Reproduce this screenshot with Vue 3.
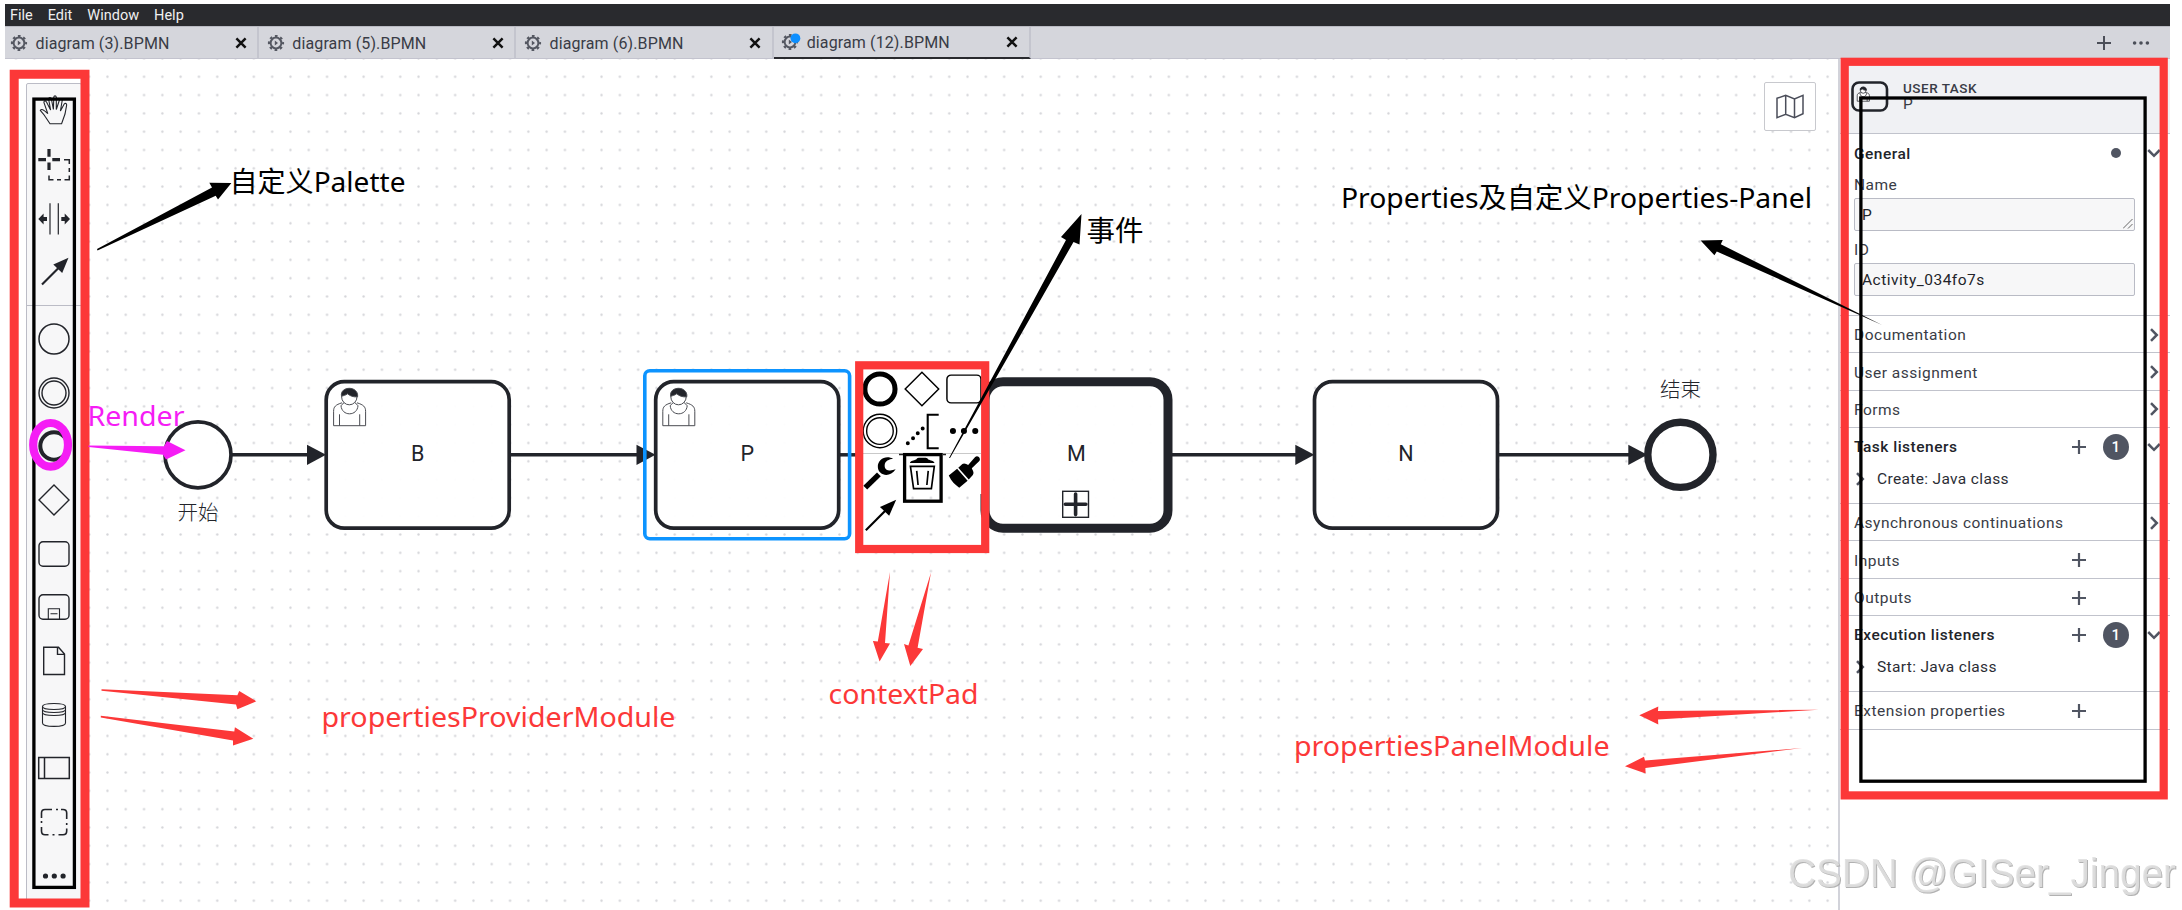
<template>
  <div class="app">
    <nav class="menu">
      <span v-for="item in menu" :key="item">{{ item }}</span>
    </nav>

    <div class="tabs">
      <div v-for="tab in tabs" :key="tab.name" class="tab" :class="{ active: tab.active }">
        <svg class="gear" viewBox="0 0 24 24">
          <circle cx="10" cy="12" r="5.4" class="gear-ring" />
          <circle cx="10" cy="12" r="7" class="gear-teeth" />
          <path d="M8.8 9.4v5.2l3.2-2.6z" class="gear-core" />
          <circle v-if="tab.active" cx="15.4" cy="8.3" r="4.9" class="gear-dirty" />
        </svg>
        <span class="tab-name">{{ tab.name }}</span>
        <svg class="close" viewBox="0 0 12 12"><path d="M1.4 1.4l9.2 9.2M10.6 1.4l-9.2 9.2" /></svg>
      </div>
      <div class="tab-actions">
        <svg class="add" viewBox="0 0 14 14"><path d="M7 0v14M0 7h14" /></svg>
        <svg class="more" viewBox="0 0 18 6">
          <circle cx="2.6" cy="3" r="1.8" /><circle cx="9" cy="3" r="1.8" /><circle cx="15.4" cy="3" r="1.8" />
        </svg>
      </div>
    </div>

    <main class="workspace">
      <section class="canvas">
        <svg class="diagram" viewBox="5 59 1833 851">
          <defs>
            <pattern id="grid" x="98.3" y="67.6" width="18.3" height="18.31" patternUnits="userSpaceOnUse">
              <circle cx="9.15" cy="9.15" r="1.15" fill="#d3d4d8" />
            </pattern>
            <g id="user">
              <path d="M9 14.5C2.500 16.500 .6 18.500 .6 23V37.400H32.600V23C32.600 18.500 30.500 16.500 24 14.500M6.500 26v11.400M26.700 26v11.400" />
              <path d="M11.800 13.500C10.600 15.500 9.500 15 8 17.500C8.500 22.500 12 25.500 16.500 25.500S24.500 22.500 25 17.500C23.500 15 22.300 15.500 21.200 13.500" />
              <ellipse cx="16.300" cy="8.500" rx="7.700" ry="8" />
              <path d="M8.500 8C7.500 2.500 12 0 16.400 0S25.300 3 24.600 8.500C20 9 17 7.500 14.500 5.500C12.500 7 10.500 7.300 8.500 8z" class="hair" />
            </g>
          </defs>
          <rect x="5" y="59" width="1833" height="851" fill="url(#grid)" />

          <g class="flow">
            <path v-for="f in flows" :key="f.from" :d="`M${f.from} 454.800H${f.to}`" />
            <path v-for="f in heads" :key="f" :d="`M${f} 444.700l19 10.100l-19 10.100z`" class="head" />
          </g>

          <circle cx="198" cy="454.800" r="33" class="shape" />
          <circle cx="1680.400" cy="454.800" r="32.600" class="shape end" />
          <rect
            v-for="t in tasks"
            :key="t.name"
            :x="t.x"
            y="381.700"
            width="183"
            height="146.500"
            rx="18"
            class="shape"
            :class="{ call: t.call }"
          />
          <use href="#user" x="333" y="388.300" class="user" />
          <use href="#user" x="662.200" y="388.300" class="user" />
          <g class="marker">
            <rect x="1062.700" y="491.300" width="25.800" height="26" />
            <path d="M1075.600 494v20.600M1065.300 504.300h20.600" />
          </g>
          <rect x="644.800" y="370.800" width="204.800" height="168" rx="5" class="selection" />
          <text v-for="t in tasks" :key="t.name" :x="t.x + 91.500" y="461.200" class="task-name">{{ t.name }}</text>
          <text x="198" y="519.500" class="event-name">开始</text>
          <text x="1680.400" y="396.500" class="event-name">结束</text>
        </svg>

        <div class="palette">
          <div v-for="entry in palette" :key="entry.name" class="entry" :class="{ last: entry.name === 'connect' }">
            <svg viewBox="0 0 40 40">
              <path
                v-for="(s, i) in entry.shapes"
                :key="i"
                :d="s.d"
                :fill="s.fill ? '#22242a' : 'none'"
                :stroke="s.fill ? 'none' : '#22242a'"
                :stroke-width="s.w || 1.4"
              />
            </svg>
          </div>
        </div>

        <div class="pad">
          <div v-for="entry in pad" :key="entry.name" class="pad-entry">
            <svg viewBox="0 0 40 40">
              <path
                v-for="(s, i) in entry.shapes"
                :key="i"
                :d="s.d"
                :fill="s.fill ? '#000' : 'none'"
                :stroke="s.fill ? 'none' : '#000'"
                :stroke-width="s.w || 1.4"
              />
            </svg>
          </div>
        </div>

        <button class="minimap">
          <svg viewBox="0 0 28 25">
            <path d="M1 4.300L9.700 1.300L18.500 5L27 1.300V19.700L18.500 23.700L9.700 20.300L1 23.700zM9.700 1.300v19M18.500 5v18.700" />
          </svg>
        </button>
      </section>

      <aside class="panel">
        <header class="panel-header">
          <svg class="panel-icon" viewBox="0 0 38 32">
            <rect x="1.500" y="1.500" width="34.500" height="28" rx="6.500" />
            <use href="#user" transform="translate(6 6) scale(.38)" />
          </svg>
          <div class="panel-title">
            <strong>USER TASK</strong>
            <span>P</span>
          </div>
        </header>

        <div class="group general">
          <div class="row bold">
            <span>General</span><i></i><i class="dot"></i>
            <svg class="chev" viewBox="0 0 14 14"><path d="M1.200 4l5.800 5.800l5.800-5.800" /></svg>
          </div>
          <label>Name</label>
          <div class="field">P
            <svg class="grip" viewBox="0 0 10 10"><path d="M0 9.500L9.500 0M5 9.500L9.500 5" /></svg>
          </div>
          <label class="id-label">ID</label>
          <div class="field">Activity_034fo7s</div>
        </div>

        <div v-for="g in groups" :key="g.name" class="group">
          <div class="row" :class="{ bold: g.count }">
            <span>{{ g.name }}</span>
            <svg v-if="g.add" class="plus" viewBox="0 0 14 14"><path d="M7 0v14M0 7h14" /></svg>
            <i v-else></i>
            <b v-if="g.count" class="badge">{{ g.count }}</b>
            <i v-else></i>
            <svg v-if="g.count" class="chev" viewBox="0 0 14 14"><path d="M1.200 4l5.800 5.800l5.800-5.800" /></svg>
            <svg v-else-if="!g.add" class="chev" viewBox="0 0 14 14"><path d="M4 1.200l5.800 5.800l-5.800 5.800" /></svg>
          </div>
          <div v-if="g.child" class="child">
            <svg class="chev" viewBox="0 0 14 14"><path d="M4 1.200l5.800 5.800l-5.800 5.800" /></svg>
            <span>{{ g.child }}</span>
          </div>
        </div>
      </aside>
    </main>

    <!-- notes drawn over the whole window -->
    <svg class="notes" viewBox="0 0 2182 910">
      <path d="M863 453.500H981" stroke="#c9c9c9" stroke-width="1.200" />
      <path d="M899 454.500h4M943 454.500h3" stroke="#222" stroke-width="1.500" />
      <g class="box black">
        <rect x="33.900" y="99.100" width="40.500" height="788.300" />
        <rect x="904.600" y="454.600" width="36.500" height="46.600" />
        <rect x="1860.900" y="98" width="284.200" height="683.200" />
      </g>
      <g class="box red">
        <path d="M14.200 74.200H85V902.900H14.200z" stroke-width="9" />
        <rect x="859.200" y="365.300" width="126" height="183.700" />
        <rect x="1844.700" y="61.800" width="319" height="733.600" />
      </g>
      <path v-for="a in blackArrows" :key="a" :d="a" />
      <path v-for="a in redArrows" :key="a" :d="a" class="red-fill" />
      <ellipse cx="50.600" cy="444.800" rx="17.400" ry="21.800" class="ring" />
      <path d="M88.500 445.500L164 446.300L167 441L185.500 450.300L166 459.500L163 454.700L88.500 447z" class="pink" />

      <text
        v-for="n in notes"
        :key="n.text"
        :x="n.x"
        :y="n.y"
        :textLength="n.w"
        lengthAdjust="spacingAndGlyphs"
        :class="n.tone"
      >{{ n.text }}</text>
      <text x="1788" y="886.500" textLength="388" lengthAdjust="spacingAndGlyphs" class="watermark">CSDN @GISer_Jinger</text>
    </svg>
  </div>
</template>

<script setup>
const menu = ['File', 'Edit', 'Window', 'Help']

const tabs = [
  { name: 'diagram (3).BPMN' },
  { name: 'diagram (5).BPMN' },
  { name: 'diagram (6).BPMN' },
  { name: 'diagram (12).BPMN', active: true }
]

const tasks = [
  { name: 'B', x: 326.2 },
  { name: 'P', x: 655.7 },
  { name: 'M', x: 985, call: true },
  { name: 'N', x: 1314.5 }
]

const flows = [
  { from: 231, to: 312 },
  { from: 510, to: 641 },
  { from: 840, to: 858 },
  { from: 1170, to: 1300 },
  { from: 1498, to: 1632 }
]
const heads = [307, 636.5, 1295.3, 1628.3]

const circle = (r, cx = 20, cy = 20) =>
  `M${cx - r} ${cy}a${r} ${r} 0 1 0 ${2 * r} 0a${r} ${r} 0 1 0 ${-2 * r} 0z`

const roundRect = (w, h, r) =>
  `M${20 - w / 2 + r} ${20 - h / 2}h${w - 2 * r}a${r} ${r} 0 0 1 ${r} ${r}v${h - 2 * r}a${r} ${r} 0 0 1 ${-r} ${r}` +
  `h${2 * r - w}a${r} ${r} 0 0 1 ${-r} ${-r}v${2 * r - h}a${r} ${r} 0 0 1 ${r} ${-r}z`

const palette = [
  {
    name: 'hand',
    shapes: [{
      w: 1.1,
      d: 'M16 32.700L11.500 26C9.500 22.500 7 20.500 6.300 19.400C7.300 17.500 9.500 18.500 13.800 22.600L9.900 11.500C9.800 9.500 11.800 9.300 12.500 11L16.600 19L14.600 8C14.800 6 17 6 17.400 8L19.400 18.500L19.800 6C20 4.500 22 4.500 22.300 6L22.300 18.500L25.600 8.500C26.500 7 28.400 7.600 28.200 9.500L26.400 20L30.200 13C31.300 11.800 33 12.600 32.600 14.400L31 23L27.600 32.700z'
    }]
  },
  {
    name: 'lasso',
    shapes: [
      { w: 3.2, d: 'M4.300 14.700H12M18.300 14.700H26M15 4V11.700M15 17.500V25' },
      { w: 1.5, d: 'M30 14.700H35.300V19M35.300 23V27M35.300 30.500V34.700H30.500M27 34.700H23M19.500 34.700H15V30.500' }
    ]
  },
  {
    name: 'space',
    shapes: [
      { w: 1.2, d: 'M16 4.300V35.500M24.300 4.300V35.500' },
      { fill: true, d: 'M4.300 20L9.600 14.500V18H13V22H9.600V25.500zM36 20L30.700 14.500V18H27.300V22H30.700V25.500z' }
    ]
  },
  {
    name: 'connect',
    shapes: [{ w: 2.2, d: 'M8 32.500L28 12.500' }, { fill: true, d: 'M34.500 5.700L19.300 12.600L28.200 20.900z' }]
  },
  { name: 'start', shapes: [{ w: 1.5, d: circle(15) }] },
  { name: 'intermediate', shapes: [{ d: circle(15) }, { d: circle(12) }] },
  { name: 'end', shapes: [{ w: 4, d: circle(13.7) }] },
  { name: 'gateway', shapes: [{ d: 'M20 5L35 20L20 35L5 20z' }] },
  { name: 'task', shapes: [{ d: roundRect(30, 24.4, 4) }] },
  {
    name: 'subprocess',
    shapes: [{ d: roundRect(30, 24.4, 4) }, { w: 1.1, d: 'M14.300 32V21.800H25.500V32M16.500 26.700H23.500' }]
  },
  { name: 'data', shapes: [{ d: 'M9.700 6.300H24.500L30.500 13V33.500H9.700zM23.500 6.600V13.400H30.500' }] },
  {
    name: 'store',
    shapes: [{
      w: 1.1,
      d: 'M8.500 11.500C8.500 7.500 31.500 7.500 31.500 11.500V28C31.500 32.500 8.500 32.500 8.500 28zM8.500 11.500C8.500 15.500 31.500 15.500 31.500 11.500M8.500 14.500C8.500 18.500 31.500 18.500 31.500 14.500M8.500 17.500C8.500 21.500 31.500 21.500 31.500 17.500'
    }]
  },
  { name: 'participant', shapes: [{ w: 1.5, d: 'M4.700 9.500H35.300V30.500H4.700zM10.500 9.500V30.500' }] },
  {
    name: 'group',
    shapes: [{
      w: 1.6,
      d: 'M7.500 16V11Q7.500 7.500 11 7.500H18M22 7.500h2M27 7.500H29Q32.700 7.500 32.700 11V17M32.700 21v2M32.700 26.500V29Q32.700 32.700 29 32.700H24.500M20.500 32.700h-2M14.500 32.700H11Q7.500 32.700 7.500 29V25M7.500 21v-2'
    }]
  },
  { name: 'more', shapes: [{ fill: true, d: circle(2.6, 11.5) + circle(2.6, 20.3) + circle(2.6, 29.1) }] }
]

const pad = [
  { name: 'end', shapes: [{ w: 4.8, d: circle(14.4) }] },
  { name: 'gateway', shapes: [{ d: 'M20 4L36 20L20 36L4 20z' }] },
  { name: 'task', shapes: [{ d: roundRect(32.5, 26.5, 4) }] },
  { name: 'intermediate', shapes: [{ w: 1.3, d: circle(16) }, { w: 1.3, d: circle(12.7) }] },
  {
    name: 'annotation',
    shapes: [
      { w: 2, d: 'M36 4.500H25.500V36.500H36' },
      { fill: true, d: circle(1.9, 6.5, 31.8) + circle(1.9, 11.5, 27) + circle(1.9, 16, 22.2) + circle(1.9, 20.7, 17.6) }
    ]
  },
  { name: 'more', shapes: [{ fill: true, d: circle(2.9, 9.5) + circle(2.9, 20) + circle(2.9, 30.8) }] },
  {
    name: 'wrench',
    shapes: [
      { w: 5.2, d: 'M6 34L19 21.300' },
      { fill: true, d: 'M32.500 6.500C26 2.500 17.500 7 18 14.500C18.500 22.500 29.500 25 35 16.500C30 18.500 24.500 18 24.500 13C24.500 8.500 29 7 32.500 6.500z' }
    ]
  },
  {
    name: 'trash',
    shapes: [
      { fill: true, d: 'M8.500 10.500C9.500 8 12 8.300 14.500 7.200Q15 5.500 17 5.500H23.500Q25.500 5.500 26 7.200C28.500 8.300 31 8 32 10.500z' },
      { w: 1.6, d: 'M9 13.700H31.800L29 35H12zM15 18L16.300 31.500M26 18L24.700 31.500' }
    ]
  },
  {
    name: 'brush',
    shapes: [{
      fill: true,
      d: 'M5.500 22.500L13.500 16L23.500 27.500L15.500 34C11.500 31.500 8 28 5.500 22.500zM14.600 15L18.500 11.500C20.500 10 22.500 12 24 12.300L30.500 5C33 2 36.700 6 34.700 8.500L27.500 15.500C28.500 18 30 19.500 28.500 22L24.600 26.300z'
    }]
  },
  {
    name: 'connect',
    shapes: [{ w: 2, d: 'M6.500 34.500L28 13' }, { fill: true, d: 'M35.500 5.500L20 12.300L28.800 20.600z' }]
  }
]

const groups = [
  { name: 'Documentation' },
  { name: 'User assignment' },
  { name: 'Forms' },
  { name: 'Task listeners', add: true, count: 1, child: 'Create: Java class' },
  { name: 'Asynchronous continuations' },
  { name: 'Inputs', add: true },
  { name: 'Outputs', add: true },
  { name: 'Execution listeners', add: true, count: 1, child: 'Start: Java class' },
  { name: 'Extension properties', add: true }
]

const blackArrows = [
  'M97 249L212 187.500L209.300 182.700L231.400 183L218 199.500L215.700 195.700L97.500 250.500z',
  'M1882 325L1716.800 251.500L1714.400 255.200L1700.600 240.400L1722.800 240L1720.800 244.300z',
  'M949 458L1007 350L1066 240L1061 237L1081.500 214L1079.500 244.500L1073.500 242L1012 350L950 458z'
]
const redArrows = [
  'M101.500 689.300L237.400 695.300L239.200 691L256.300 701.300L237.400 709.300L236 704.500L101.500 690.700z',
  'M100.800 715.800L234.300 731.500L234.900 727.300L253.300 738.700L233 745.500L233 740.500L100.800 717.400z',
  'M890 572L885 643L890 643.500L879.600 661.500L872.900 641L877.800 641.500z',
  'M931 572.500L917.600 647.700L923 649L910.300 666L904 644L908.400 645.500z',
  'M1818.500 709.700L1658 711L1658.300 706.600L1639.300 715.300L1658.300 724.400L1658 719.600z',
  'M1802 748L1645 760.500L1644 756.800L1625 766.300L1645.600 773.400L1645.400 768z'
]

const notes = [
  { text: '自定义Palette', x: 229.5, y: 192.3, w: 176, tone: 'dark' },
  { text: '事件', x: 1086.5, y: 241, w: 57, tone: 'dark' },
  { text: 'Properties及自定义Properties-Panel', x: 1341, y: 208, w: 471, tone: 'dark' },
  { text: 'Render', x: 87.5, y: 426.2, w: 97, tone: 'pink' },
  { text: 'contextPad', x: 828.5, y: 703.5, w: 150, tone: 'red-fill' },
  { text: 'propertiesProviderModule', x: 321.5, y: 727, w: 354, tone: 'red-fill' },
  { text: 'propertiesPanelModule', x: 1294, y: 755.8, w: 315.5, tone: 'red-fill' }
]
</script>

<style>
body {
  background: #fff;
}
</style>

<style scoped>
.app {
  position: relative;
  box-sizing: border-box;
  width: 2182px;
  height: 910px;
  padding: 4px 12px 0 5px;
  display: flex;
  flex-direction: column;
  overflow: hidden;
  font-family: Roboto, "Noto Sans CJK SC", sans-serif;
  font-size: 15.5px;
  color: #393c46;
}

.menu {
  display: flex;
  align-items: center;
  gap: 15px;
  height: 22px;
  padding-left: 5px;
  background: #292a2e;
  color: #f0f0f0;
  font-size: 14.5px;
}

.tabs {
  display: flex;
  box-sizing: border-box;
  height: 33px;
  background: #d5d6dc;
  border-top: 1px solid #b9bac2;
  border-bottom: 1px solid #c3c3ce;
}

.tab {
  display: flex;
  align-items: center;
  box-sizing: border-box;
  width: 257.2px;
  height: 32px;
  padding: 0 10.5px 0 6.5px;
  border-right: 2px solid #c4c5ce;
}

.tab:first-child {
  width: 254.3px;
  padding-left: 4px;
}

.tab.active {
  border-bottom: 2.5px solid #292a2e;
}

.gear {
  width: 24px;
  height: 24px;
}

.gear-ring {
  fill: none;
  stroke: #555862;
  stroke-width: 2;
}

.gear-teeth {
  fill: none;
  stroke: #555862;
  stroke-width: 2.2;
  stroke-dasharray: 2.6 2.9;
  stroke-dashoffset: 1.3;
}

.gear-core {
  fill: #555862;
}

.gear-dirty {
  fill: #0d8fff;
}

.tab-name {
  flex: 1;
  padding-left: 2.5px;
  font-size: 16px;
  letter-spacing: 0.12px;
}

.close {
  width: 12px;
  height: 12px;
  stroke: #111;
  stroke-width: 2.5;
}

.tab-actions {
  flex: 1;
  display: flex;
  align-items: center;
  justify-content: flex-end;
  gap: 21px;
  padding-right: 20px;
}

.add {
  width: 14px;
  height: 14px;
  stroke: #4b4e58;
  stroke-width: 2;
}

.more {
  width: 18px;
  height: 6px;
  fill: #4b4e58;
}

.workspace {
  flex: 1;
  display: flex;
  min-height: 0;
}

.canvas {
  position: relative;
  flex: 1;
}

.diagram {
  display: block;
  width: 1833px;
  height: 851px;
}

.flow path {
  stroke: #22242a;
  stroke-width: 3.5;
}

.flow .head {
  fill: #22242a;
  stroke: none;
}

.shape {
  fill: #fff;
  fill-opacity: 0.95;
  stroke: #22242a;
  stroke-width: 3.7;
}

.shape.end {
  stroke-width: 7.4;
}

.shape.call {
  stroke-width: 9;
}

.user {
  fill: #fff;
  stroke: #4a4c52;
  stroke-width: 1;
}

.hair {
  fill: #22242a;
}

.marker {
  fill: none;
  stroke: #22242a;
  stroke-width: 1.4;
}

.marker path {
  stroke-width: 3.6;
  stroke-linecap: round;
}

.selection {
  fill: none;
  stroke: #0d94ff;
  stroke-width: 3.6;
}

.task-name {
  font-size: 21.5px;
  text-anchor: middle;
  fill: #22242a;
}

.event-name {
  font-family: "Noto Sans CJK SC", sans-serif;
  font-size: 20.5px;
  font-weight: 300;
  text-anchor: middle;
  fill: #22242a;
}

/* palette floats over the canvas */
.palette {
  position: absolute;
  left: 21.3px;
  top: 23.5px;
  width: 56px;
  height: 818px;
  box-sizing: border-box;
  padding-top: 1px;
  display: flex;
  flex-direction: column;
  background: #f7f7f8;
  border: 1px solid #bbbcc6;
  border-radius: 2px;
}

.entry {
  flex: none;
  display: flex;
  align-items: center;
  height: 53.7px;
  padding-left: 6.4px;
}

.entry.last {
  height: 60px;
  margin-bottom: 6.5px;
  box-sizing: border-box;
  padding-bottom: 6.3px;
  border-bottom: 1px solid #bbbcc6;
}

.entry svg {
  width: 40px;
  height: 40px;
}

/* context menu next to the selected task */
.pad {
  position: absolute;
  left: 854px;
  top: 309.5px;
  display: grid;
  grid-template-columns: repeat(3, 41.9px);
  grid-auto-rows: 41.8px;
}

.pad-entry {
  display: flex;
  align-items: center;
  justify-content: center;
  background: #fff;
}

.pad-entry svg {
  width: 42px;
  height: 42px;
}

.minimap {
  position: absolute;
  left: 1759px;
  top: 23px;
  width: 52px;
  height: 49px;
  padding: 0;
  display: flex;
  align-items: center;
  justify-content: center;
  background: #fff;
  border: 1px solid #c8c9ce;
  border-radius: 2px;
}

.minimap svg {
  width: 28px;
  height: 25px;
  fill: none;
  stroke: #4b4e5a;
  stroke-width: 1.5;
}

.panel {
  box-sizing: border-box;
  width: 332px;
  border-left: 2px solid #d2d3da;
  letter-spacing: 0.5px;
  white-space: nowrap;
}

.panel-header {
  display: flex;
  box-sizing: border-box;
  height: 75px;
  padding: 22px 0 0 11px;
  gap: 14px;
  background: #f0f1f4;
  border-bottom: 1px solid #c1c3cc;
}

.panel-icon {
  width: 38px;
  height: 32px;
}

.panel-icon rect {
  fill: none;
  stroke: #22242a;
  stroke-width: 2.6;
}

.panel-icon use {
  fill: #fff;
  stroke: #22242a;
  stroke-width: 2;
}

.panel-title {
  display: flex;
  flex-direction: column;
  line-height: 16px;
}

.panel-title strong {
  font-size: 13.5px;
  font-weight: 500;
  letter-spacing: 0.5px;
  line-height: 15px;
}

.group {
  border-bottom: 1px solid #c1c3cc;
}

.general {
  box-sizing: border-box;
  height: 182px;
}

.row {
  display: grid;
  grid-template-columns: 1fr 32px 42.8px 32.6px;
  align-items: center;
  justify-items: center;
  height: 36.4px;
  padding-left: 14px;
}

/* long names may run under the empty "+" slot */
.row span {
  justify-self: start;
  width: 0;
  padding-top: 2px;
}

.row > :not(span) {
  position: relative;
  top: 0.5px;
}

.general .row {
  height: 37px;
  margin-bottom: 2px;
}

.bold {
  color: #22242a;
  font-weight: 500;
}

.dot {
  width: 10px;
  height: 10px;
  border-radius: 50%;
  background: #505562;
}

.chev {
  width: 14px;
  height: 14px;
  fill: none;
  stroke: #505562;
  stroke-width: 2.5;
}

.plus {
  width: 14px;
  height: 14px;
  stroke: #505562;
  stroke-width: 2.2;
}

.badge {
  width: 26px;
  height: 26px;
  border-radius: 50%;
  background: #505562;
  color: #fff;
  font-size: 15px;
  font-weight: 500;
  line-height: 26px;
  text-align: center;
}

label {
  display: block;
  padding: 3px 0 4px 14px;
  line-height: 18px;
}

.id-label {
  padding: 11px 0 4px 14px;
  line-height: 17.5px;
}

.field {
  position: relative;
  box-sizing: border-box;
  width: 281px;
  height: 32.7px;
  margin-left: 14px;
  padding-left: 7px;
  line-height: 32px;
  background: #f7f7f8;
  border: 1px solid #b9bbc5;
  border-radius: 2px;
  color: #22242a;
}

.grip {
  position: absolute;
  right: 1px;
  bottom: 1px;
  width: 10px;
  height: 10px;
  stroke: #666;
  stroke-width: 1;
}

.child {
  display: flex;
  height: 38.5px;
  padding: 4px 0 0 13px;
  gap: 10px;
  box-sizing: border-box;
  line-height: 20px;
  letter-spacing: 0.35px;
  color: #2b2d35;
}

.child .chev {
  margin-top: 3px;
}

.notes {
  position: absolute;
  left: 0;
  top: 0;
  width: 2182px;
  height: 910px;
}

.notes text {
  font-family: "Noto Sans", "Noto Sans CJK SC", sans-serif;
  font-size: 28px;
}

.notes .dark {
  fill: #000;
}

.box {
  fill: none;
}

.black {
  stroke: #000;
  stroke-width: 3.3;
}

.red {
  stroke: #fc3838;
  stroke-width: 8.2;
}

.red-fill {
  fill: #fc3838;
}

.pink {
  fill: #f51df5;
}

.ring {
  fill: none;
  stroke: #f51df5;
  stroke-width: 8.2;
}

.notes .watermark {
  font-family: "Liberation Sans", sans-serif;
  font-size: 41px;
  fill: #e0e0e0;
  fill-opacity: 0.9;
  filter: drop-shadow(1px 1px 0 #a8a8a8);
}
</style>
